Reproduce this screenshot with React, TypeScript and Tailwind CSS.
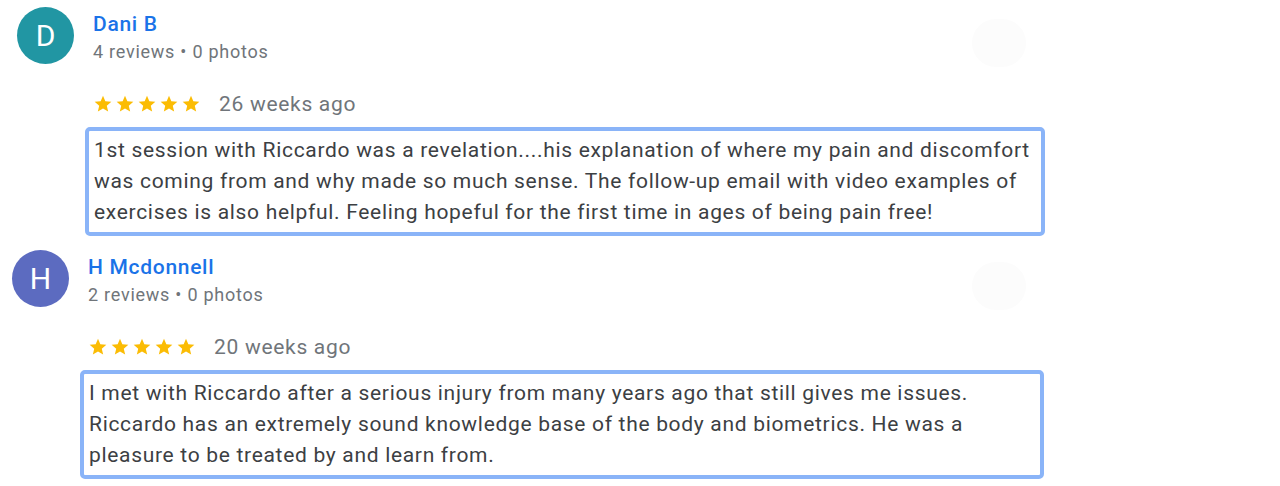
const reviews = [
  {
    initial: "D",
    avatar: "bg-[#2196a3]",
    name: "Dani B",
    stats: "4 reviews • 0 photos",
    when: "26 weeks ago",
    pad: "pl-[17px]",
    box: "w-[960px]",
    text: [
      "1st session with Riccardo was a revelation....his explanation of where my pain and discomfort",
      "was coming from and why made so much sense. The follow-up email with video examples of",
      "exercises is also helpful. Feeling hopeful for the first time in ages of being pain free!",
    ],
  },
  {
    initial: "H",
    avatar: "bg-[#5c6bc0]",
    name: "H Mcdonnell",
    stats: "2 reviews • 0 photos",
    when: "20 weeks ago",
    pad: "pl-[12px]",
    box: "w-[964px]",
    text: [
      "I met with Riccardo after a serious injury from many years ago that still gives me issues.",
      "Riccardo has an extremely sound knowledge base of the body and biometrics. He was a",
      "pleasure to be treated by and learn from.",
    ],
  },
];

function Star() {
  return (
    <svg viewBox="0 0 24 24" className="w-[20px] h-[20px]" fill="#fbbc04">
      <path d="M12 17.27 18.18 21l-1.64-7.03L22 9.24l-7.19-.61L12 2 9.19 8.63 2 9.24l5.46 4.73L5.82 21z" />
    </svg>
  );
}

export default function App() {
  return (
    <div className="w-[1280px] h-[486px] bg-white overflow-hidden pt-[7px] font-['Roboto',sans-serif]">
      {reviews.map((r, i) => (
        <div key={i} className={`relative ${r.pad} ${i > 0 ? "mt-[14px]" : ""}`}>
          {/* faint hover blob on the right */}
          <div className="absolute left-[972px] top-[12px] w-[54px] h-[48px] rounded-full bg-[#fcfcfc]" />
          <div className="flex gap-[19px]">
            <div className={`w-[57px] h-[57px] rounded-full ${r.avatar} flex items-center justify-center text-white text-[30px]`}>
              {r.initial}
            </div>
            <div>
              <div className="mt-[5px] text-[21px] leading-[24px] tracking-[0.7px] font-medium text-[#1a73e8]">{r.name}</div>
              <div className="mt-[4px] text-[18px] leading-[24px] tracking-[0.75px] text-[#70757a]">{r.stats}</div>
            </div>
          </div>
          <div className="mt-[26px] ml-[76px] flex items-center h-[28px]">
            <div className="flex gap-[2px]">
              <Star />
              <Star />
              <Star />
              <Star />
              <Star />
            </div>
            <span className="ml-[18px] text-[21px] leading-[28px] tracking-[0.7px] text-[#70757a]">{r.when}</span>
          </div>
          <div className={`mt-[9px] ml-[68px] ${r.box} h-[109px] border-4 border-[#8ab4f8] rounded-[5px] pl-[5px] pt-[4px] text-[21px] leading-[31px] tracking-[0.69px] text-[#3c4043]`}>
            {r.text.map((l, j) => (
              <div key={j} className="whitespace-nowrap">{l}</div>
            ))}
          </div>
        </div>
      ))}
    </div>
  );
}
